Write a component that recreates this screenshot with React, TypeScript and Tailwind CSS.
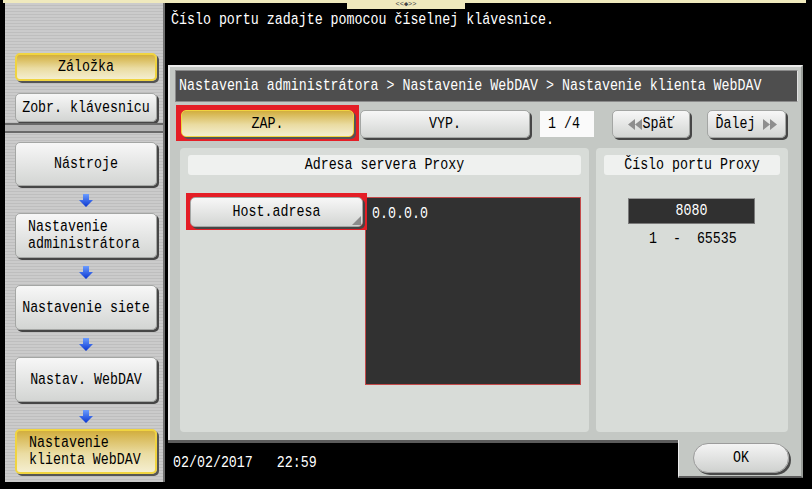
import React from "react";

function T({ children, className = "" }: { children: React.ReactNode; className?: string }) {
  return <span className={"inline-block scale-y-[1.22] whitespace-pre " + className}>{children}</span>;
}

function Arrow() {
  return (
    <svg width="14" height="13" viewBox="0 0 14 13">
      <defs>
        <linearGradient id="ag" x1="0" y1="0" x2="0" y2="1">
          <stop offset="0" stopColor="#6a9cff" />
          <stop offset="1" stopColor="#0a36d0" />
        </linearGradient>
      </defs>
      <path d="M4 0h6v6h4l-7 7-7-7h4z" fill="url(#ag)" />
    </svg>
  );
}

function DoubleTri({ dir }: { dir: "l" | "r" }) {
  return (
    <svg width="14" height="11" viewBox="0 0 14 11" className="shrink-0">
      {dir === "l" ? (
        <path d="M7 0v11L0 5.5zM14 0v11L7 5.5z" fill="#8e8e8e" />
      ) : (
        <path d="M0 0v11l7-5.5zM7 0v11l7-5.5z" fill="#8e8e8e" />
      )}
    </svg>
  );
}

const gray =
  "rounded-[5px] border border-[#a4a6a4] bg-[linear-gradient(#f7f7f7,#d3d5d3)] shadow-[2px_2px_0_#464646]";
const yellow =
  "rounded-[5px] border-2 border-[#f0d440] bg-[linear-gradient(#d2ae3e,#eadca2_55%,#f4eed0)] shadow-[2px_2px_0_#555]";

function SideBtn({ y, children, h = 45, left = false }: { y?: boolean; children: React.ReactNode; h?: number; left?: boolean }) {
  return (
    <div
      className={
        (y ? yellow : gray) +
        " w-[142px] flex items-center text-[13.3px] leading-[14px] text-black " +
        (left ? "justify-start pl-[12px]" : "justify-center")
      }
      style={{ height: h }}
    >
      {children}
    </div>
  );
}

function ArrowRow() {
  return (
    <div className="h-[27px] w-[142px] flex items-center justify-center pt-[1px]">
      <Arrow />
    </div>
  );
}

export default function App() {
  return (
    <div className="w-[812px] h-[489px] bg-black relative overflow-hidden font-['Liberation_Mono',monospace] text-[13.3px]">
      {/* top line */}
      <div className="h-[3px] ml-[3px] w-[803px] bg-[#efe9bd]" />
      <div className="absolute left-[347px] top-0 w-[118px] h-[9px] bg-[#efe9bd] flex items-center justify-center text-[7px] leading-[7px] text-[#444]">
        {"<<\u25C6>>"}
      </div>

      <div className="flex">
        {/* sidebar */}
        <div className="ml-[5px] w-[160px] h-[479px] flex flex-col border-r-2 border-[#707070] bg-[repeating-linear-gradient(180deg,#cbcbcb_0px,#cbcbcb_2px,#bebebe_2px,#bebebe_3px)]">
          <div className="h-[120px] pl-[10px] pt-[50px] flex flex-col gap-[12px]">
            <div className={yellow + " w-[142px] h-[28px] flex items-center justify-center text-black"}>
              <T>Záložka</T>
            </div>
            <div className={gray + " w-[142px] h-[29px] flex items-center justify-center text-black"}>
              <T>Zobr. klávesnicu</T>
            </div>
          </div>
          <div className="h-[10px] border-t-2 border-b-2 border-[#6a6a6a] bg-[#b4b4b4]" />
          <div className="pl-[10px] pt-[9px] flex flex-col">
            <SideBtn h={44}>
              <T>Nástroje</T>
            </SideBtn>
            <ArrowRow />
            <SideBtn left>
              <T>{"Nastavenie\nadministrátora"}</T>
            </SideBtn>
            <ArrowRow />
            <SideBtn>
              <T>Nastavenie siete</T>
            </SideBtn>
            <ArrowRow />
            <SideBtn>
              <T>Nastav. WebDAV</T>
            </SideBtn>
            <ArrowRow />
            <SideBtn y left>
              <T>{"Nastavenie\nklienta WebDAV"}</T>
            </SideBtn>
          </div>
        </div>

        {/* main */}
        <div className="ml-[3px] w-[635px] flex flex-col">
          <div className="h-[62px] pl-[3px] pt-[7px] text-white">
            <T>Číslo portu zadajte pomocou číselnej klávesnice.</T>
          </div>

          {/* window */}
          <div className="h-[375px] border-l-2 border-t-2 border-[#ececec] border-r-2 border-r-[#9a9e9a] bg-[#c4c8c4] pl-[5px] pr-[3px] pt-[3px] flex flex-col">
            <div className="h-[32px] bg-[#4e4e4e] border border-[#8a8a8a] border-r-[#e0e0e0] flex items-center pl-[3px] text-white">
              <T>Nastavenia administrátora &gt; Nastavenie WebDAV &gt; Nastavenie klienta WebDAV</T>
            </div>

            <div className="mt-[3px] h-[36px] flex items-start">
              <div className="ml-[1px] w-[183px] h-[36px] bg-[#e41e26] p-[5px] pb-[4px]">
                <div className={yellow + " h-full flex items-center justify-center text-black border-[1px] shadow-[1px_1px_0_#777]"}>
                  <T>ZAP.</T>
                </div>
              </div>
              <div className={gray + " ml-[1px] mt-[5px] w-[170px] h-[28px] flex items-center justify-center text-black"}>
                <T>VYP.</T>
              </div>
              <div className="ml-[10px] mt-[6px] w-[54px] h-[26px] bg-[#fafafa] flex items-center pl-[8px] text-black">
                <T>1 /4</T>
              </div>
              <div className={gray + " ml-[18px] mt-[5px] w-[78px] h-[28px] flex items-center justify-center gap-[1px] text-black"}>
                <DoubleTri dir="l" />
                <T>Späť</T>
              </div>
              <div className={gray + " ml-[17px] mt-[5px] w-[79px] h-[28px] flex items-center justify-center gap-[8px] text-black"}>
                <T>Ďalej</T>
                <DoubleTri dir="r" />
              </div>
            </div>

            <div className="mt-[7px] h-[284px] flex">
              {/* left panel */}
              <div className="ml-[5px] w-[409px] h-full rounded-[4px] bg-[#d8dcd8] flex flex-col">
                <div className="mx-[8px] mt-[7px] h-[20px] rounded-[3px] bg-[#eff1ef] flex items-center justify-center text-black">
                  <T>Adresa servera Proxy</T>
                </div>
                <div className="mt-[18px] flex items-start">
                  <div className="relative z-10 ml-[6px] w-[181px] h-[37px] bg-[#e41e26] p-[4px] pb-[3px]">
                    <div className={gray + " relative h-full flex items-center justify-center text-black shadow-[1px_1px_0_#666]"}>
                      <T>Host.adresa</T>
                      <div className="absolute right-[1px] bottom-[1px] w-0 h-0 border-l-[9px] border-l-transparent border-b-[9px] border-b-[#8c8c8c]" />
                    </div>
                  </div>
                  <div className="ml-[-2px] mt-[4px] w-[216px] h-[188px] bg-[#313131] border border-[#c44a4a] pl-[6px] pt-[6px] text-white">
                    <T>0.0.0.0</T>
                  </div>
                </div>
              </div>

              {/* right panel */}
              <div className="ml-[7px] w-[192px] h-full rounded-[4px] bg-[#d8dcd8] flex flex-col">
                <div className="mx-[8px] mt-[7px] h-[20px] rounded-[3px] bg-[#eff1ef] flex items-center justify-center text-black">
                  <T>Číslo portu Proxy</T>
                </div>
                <div className="ml-[32px] mt-[23px] w-[127px] h-[26px] bg-[#303030] border border-[#7a7a7a] border-t-[#9a9a9a] flex items-center justify-center text-white">
                  <T>8080</T>
                </div>
                <div className="pl-[53px] mt-[5px] text-black">
                  <T>1  -  65535</T>
                </div>
              </div>
            </div>
          </div>

          {/* bottom */}
          <div className="flex h-[41px]">
            <div className="w-[510px] border-t-[3px] border-[#5c5c5c] pl-[5px] pt-[10px] text-white">
              <T>02/02/2017   22:59</T>
            </div>
            <div className="w-[125px] h-[38px] bg-[#c4c8c4] border-l border-[#ececec] border-r-2 border-r-[#9a9e9a] border-b-2 border-b-[#5c5c5c] pl-[14px] pt-[3px]">
              <div className="w-[96px] h-[30px] rounded-[15px] border border-[#9c9c9c] bg-[linear-gradient(#f4f4f4,#cfd1cf)] shadow-[2px_2px_0_#4a4a4a] flex items-center justify-center text-black">
                <T>OK</T>
              </div>
            </div>
          </div>
        </div>
      </div>
    </div>
  );
}
